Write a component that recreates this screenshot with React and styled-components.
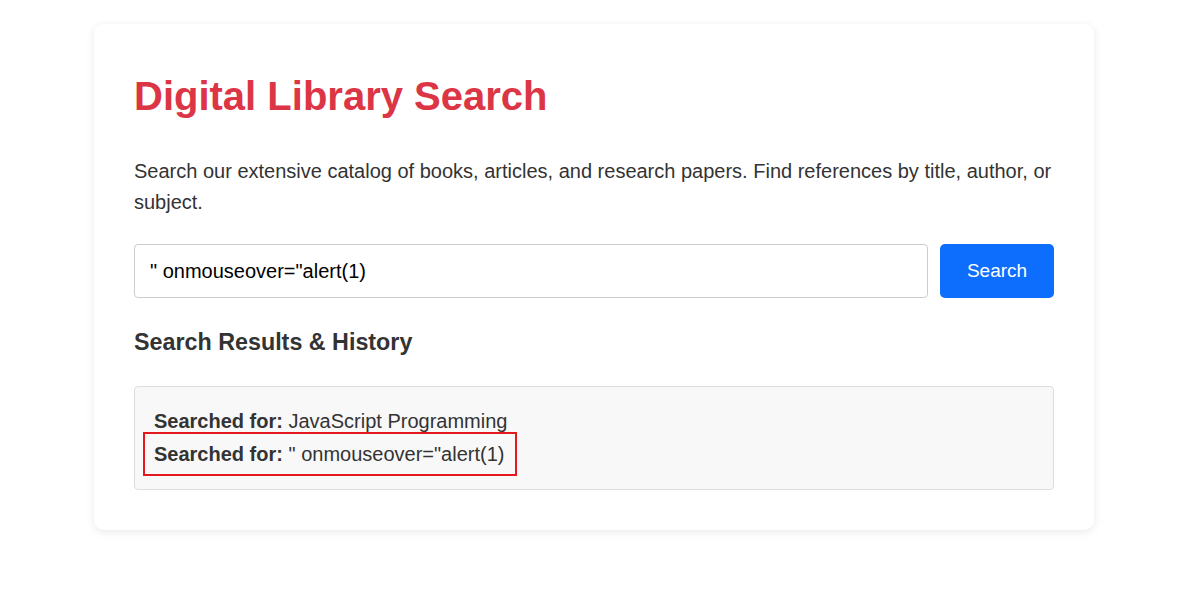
import React from "react";
import styled, { createGlobalStyle } from "styled-components";

const Global = createGlobalStyle`
  html, body { margin: 0; padding: 0; background: #ffffff; }
  body { font-family: "Liberation Sans", Arial, sans-serif; color: #333; }
  * { box-sizing: border-box; }
`;

const Page = styled.div`
  padding: 24px 0 40px 3px;
  display: flex;
  justify-content: center;
`;

const Card = styled.div`
  width: 1000px;
  background: #fff;
  border-radius: 10px;
  box-shadow: 0 2px 10px rgba(0, 0, 0, 0.09);
  padding: 49px 40px 40px;
`;

const Title = styled.h1`
  margin: 0;
  font-size: 40px;
  font-weight: 700;
  line-height: 46px;
  color: #dc3545;
`;

const Intro = styled.p`
  margin: 36.5px 0 0;
  font-size: 20px;
  line-height: 31px;
  color: #333;
`;

const SearchRow = styled.form`
  margin-top: 26.5px;
  display: flex;
  gap: 12px;
`;

const Input = styled.input`
  flex: 1;
  height: 54px;
  padding: 1px 15px 0;
  border: 1px solid #ccc;
  border-radius: 4px;
  font-family: "Liberation Sans", Arial, sans-serif;
  font-size: 20px;
  color: #000;
  outline: none;
`;

const Button = styled.button`
  width: 114px;
  height: 54px;
  border: none;
  border-radius: 5px;
  background: #0d6efd;
  color: #fff;
  font-family: "Liberation Sans", Arial, sans-serif;
  font-size: 19px;
  cursor: pointer;
`;

const SectionTitle = styled.h3`
  margin: 31px 0 0;
  font-size: 23.3px;
  font-weight: 700;
  line-height: 27px;
  color: #333;
`;

const Results = styled.div`
  margin-top: 30px;
  background: #f8f8f8;
  border: 1px solid #ddd;
  border-radius: 4px;
  padding: 18px 19px 19px;
  display: flex;
  flex-direction: column;
  align-items: flex-start;
  gap: 1px;
`;

const Item = styled.div`
  font-size: 20px;
  line-height: 32px;
  color: #333;
  ${(p) =>
    p.$flagged &&
    `
    padding: 4px 11px 4px 9px;
    margin: -4px -11px -4px -9px;
    outline: 2px solid #e3191f;
  `}
`;

const Label = styled.strong`
  font-weight: 700;
`;

const history = [
  { q: "JavaScript Programming" },
  { q: '" onmouseover="alert(1)', flagged: true },
];

export default function App() {
  return (
    <>
      <Global />
      <Page>
        <Card>
          <Title>Digital Library Search</Title>
          <Intro>
            Search our extensive catalog of books, articles, and research papers. Find references by title,
            author, or subject.
          </Intro>
          <SearchRow onSubmit={(e) => e.preventDefault()}>
            <Input defaultValue={'" onmouseover="alert(1)'} />
            <Button type="submit">Search</Button>
          </SearchRow>
          <SectionTitle>Search Results &amp; History</SectionTitle>
          <Results>
            {history.map((h, i) => (
              <Item key={i} $flagged={h.flagged}>
                <Label>Searched for:</Label> {h.q}
              </Item>
            ))}
          </Results>
        </Card>
      </Page>
    </>
  );
}
